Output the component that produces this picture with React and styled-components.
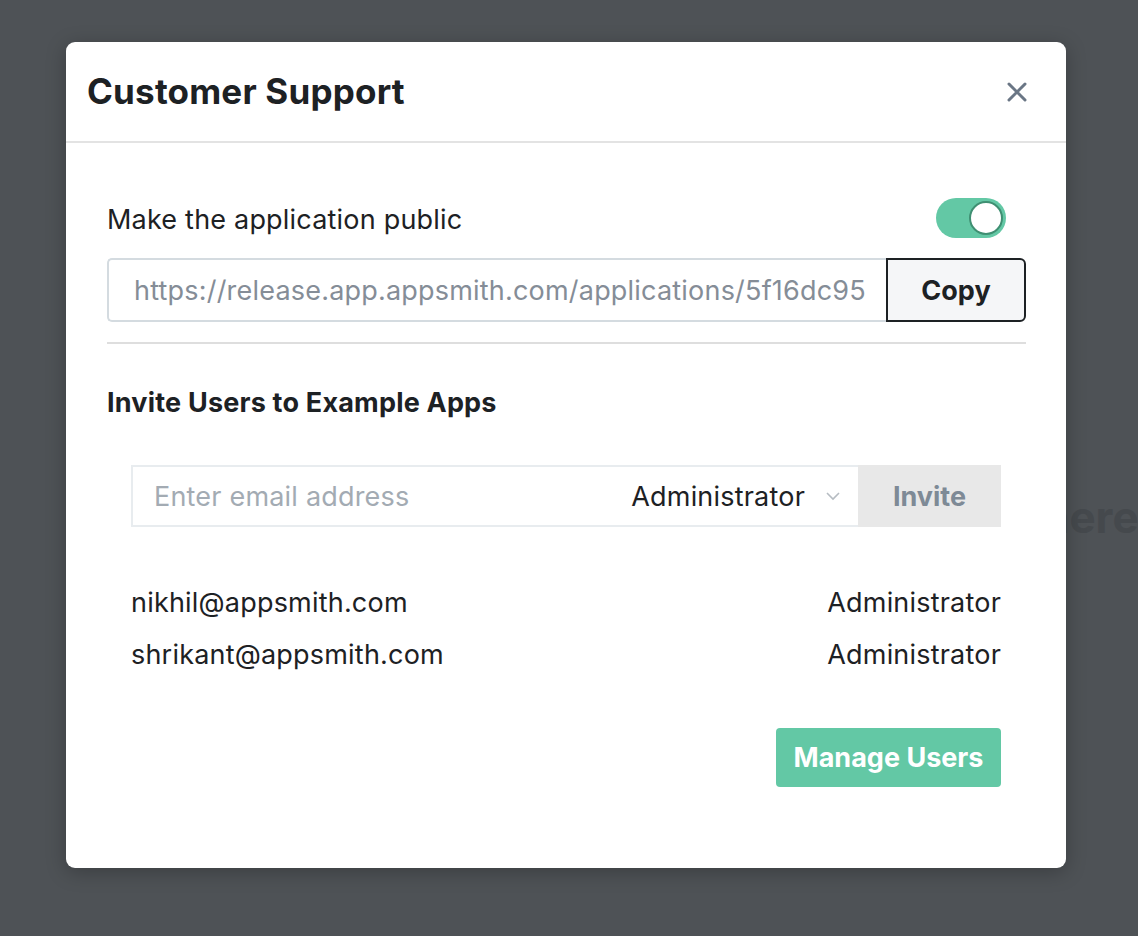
import styled, { createGlobalStyle } from 'styled-components';

const GlobalStyle = createGlobalStyle`
	html, body {
		margin: 0;
		padding: 0;
		background: #4e5256;
		font-family: Inter, 'Noto Sans', sans-serif;
		color: #1d2124;
	}
	* { box-sizing: border-box; }
`;

const users = [
	{ email: 'nikhil@appsmith.com', role: 'Administrator' },
	{ email: 'shrikant@appsmith.com', role: 'Administrator' },
];

export default function App() {
	return (
		<>
			<GlobalStyle />
			<Page>
				<Backdrop>here</Backdrop>
				<Modal>
					<Header>
						<Title>Customer Support</Title>
						<Close aria-label='close'>
							<svg width='22' height='22' viewBox='0 0 22 22'>
								<path d='M3 3 L19 19 M19 3 L3 19' stroke='#6a7685' strokeWidth='3' strokeLinecap='round' />
							</svg>
						</Close>
					</Header>
					<Body>
						<PublicRow>
							<Label>Make the application public</Label>
							<Toggle>
								<Knob />
							</Toggle>
						</PublicRow>
						<UrlRow>
							<UrlBox>https://release.app.appsmith.com/applications/5f16dc95</UrlBox>
							<CopyButton>Copy</CopyButton>
						</UrlRow>
						<Divider />
						<SectionTitle>Invite Users to Example Apps</SectionTitle>
						<Inset>
							<InviteRow>
								<EmailField>Enter email address</EmailField>
								<RoleSelect>
									Administrator
									<svg width='16' height='10' viewBox='0 0 16 10'>
										<path d='M2 2 L8 8 L14 2' fill='none' stroke='#b6bcc2' strokeWidth='1.6' />
									</svg>
								</RoleSelect>
								<InviteButton>Invite</InviteButton>
							</InviteRow>
							<UserList>
								{users.map(u => (
									<UserRow key={u.email}>
										<span>{u.email}</span>
										<span>{u.role}</span>
									</UserRow>
								))}
							</UserList>
							<Footer>
								<PrimaryButton>Manage Users</PrimaryButton>
							</Footer>
						</Inset>
					</Body>
				</Modal>
			</Page>
		</>
	);
}

const Page = styled.div`
	position: relative;
	width: 1138px;
	height: 936px;
	overflow: hidden;
	padding: 42px 0 0 66px;
`;

const Backdrop = styled.div`
	position: absolute;
	top: 493px;
	left: 1042px;
	font-size: 44px;
	line-height: 48px;
	font-weight: 700;
	color: #45494d;
	white-space: nowrap;
`;

const Modal = styled.div`
	position: relative;
	width: 1000px;
	height: 826px;
	background: #fff;
	border-radius: 9px;
	box-shadow: 0 4px 20px rgba(0, 0, 0, 0.25);
`;

const Header = styled.div`
	height: 101px;
	display: flex;
	align-items: center;
	justify-content: space-between;
	padding: 0 38px 0 21px;
	border-bottom: 2px solid #e3e3e3;
`;

const Title = styled.h1`
	margin: 0 0 2px;
	font-size: 35px;
	font-weight: 700;
	color: #1d2124;
	letter-spacing: 0.2px;
`;

const Close = styled.div`
	display: flex;
	width: 22px;
	height: 22px;
	cursor: pointer;
`;

const Body = styled.div`
	padding: 55px 40px 0 41px;
`;

const PublicRow = styled.div`
	display: flex;
	align-items: center;
	justify-content: space-between;
	padding-right: 20px;
	height: 40px;
`;

const Label = styled.span`
	font-size: 27px;
	letter-spacing: 0.2px;
	margin-top: 3px;
	color: #1d2124;
`;

const Toggle = styled.div`
	position: relative;
	width: 70px;
	height: 40px;
	border-radius: 20px;
	background: #63c8a5;
`;

const Knob = styled.div`
	position: absolute;
	top: 3px;
	right: 3px;
	width: 34px;
	height: 34px;
	border-radius: 50%;
	background: #fff;
	border: 2px solid #3f8f72;
`;

const UrlRow = styled.div`
	display: flex;
	margin-top: 20px;
	height: 64px;
`;

const UrlBox = styled.div`
	flex: 1;
	display: flex;
	align-items: center;
	padding-left: 25px;
	font-size: 27px;
	letter-spacing: 0.2px;
	color: #858d97;
	border: 2px solid #d4dbe0;
	border-right: none;
	border-radius: 5px 0 0 5px;
	white-space: nowrap;
	overflow: hidden;
`;

const CopyButton = styled.div`
	width: 140px;
	display: flex;
	align-items: center;
	justify-content: center;
	background: #f5f6f8;
	border: 2px solid #1d2124;
	border-radius: 0 6px 6px 0;
	font-size: 27px;
	font-weight: 700;
	color: #1d2124;
`;

const Divider = styled.div`
	height: 2px;
	background: #dedede;
	margin-top: 20px;
`;

const SectionTitle = styled.h2`
	margin: 44px 0 0;
	font-size: 27px;
	font-weight: 700;
	line-height: 30px;
	letter-spacing: 0.2px;
	color: #1d2124;
`;

const Inset = styled.div`
	padding: 0 25px 0 24px;
`;

const InviteRow = styled.div`
	display: flex;
	margin-top: 47px;
	height: 62px;
`;

const EmailField = styled.div`
	flex: 1;
	display: flex;
	align-items: center;
	padding-left: 21px;
	font-size: 27px;
	letter-spacing: 0.2px;
	color: #a3abb3;
	border: 2px solid #e8ecef;
	border-right: none;
`;

const RoleSelect = styled.div`
	display: flex;
	align-items: center;
	gap: 20px;
	padding-right: 17px;
	font-size: 27px;
	letter-spacing: 0.2px;
	color: #1d2124;
	border-top: 2px solid #e8ecef;
	border-bottom: 2px solid #e8ecef;
`;

const InviteButton = styled.div`
	width: 143px;
	display: flex;
	align-items: center;
	justify-content: center;
	background: #e8e8e8;
	font-size: 27px;
	font-weight: 700;
	color: #7e8a96;
`;

const UserList = styled.div`
	display: flex;
	flex-direction: column;
	gap: 22px;
	margin-top: 61px;
`;

const UserRow = styled.div`
	display: flex;
	justify-content: space-between;
	font-size: 27px;
	line-height: 30px;
	letter-spacing: 0.2px;
	color: #1d2124;
`;

const Footer = styled.div`
	display: flex;
	justify-content: flex-end;
	margin-top: 58px;
`;

const PrimaryButton = styled.div`
	width: 225px;
	height: 59px;
	display: flex;
	align-items: center;
	justify-content: center;
	background: #63c8a5;
	border-radius: 4px;
	color: #fff;
	font-size: 27px;
	font-weight: 700;
`;
